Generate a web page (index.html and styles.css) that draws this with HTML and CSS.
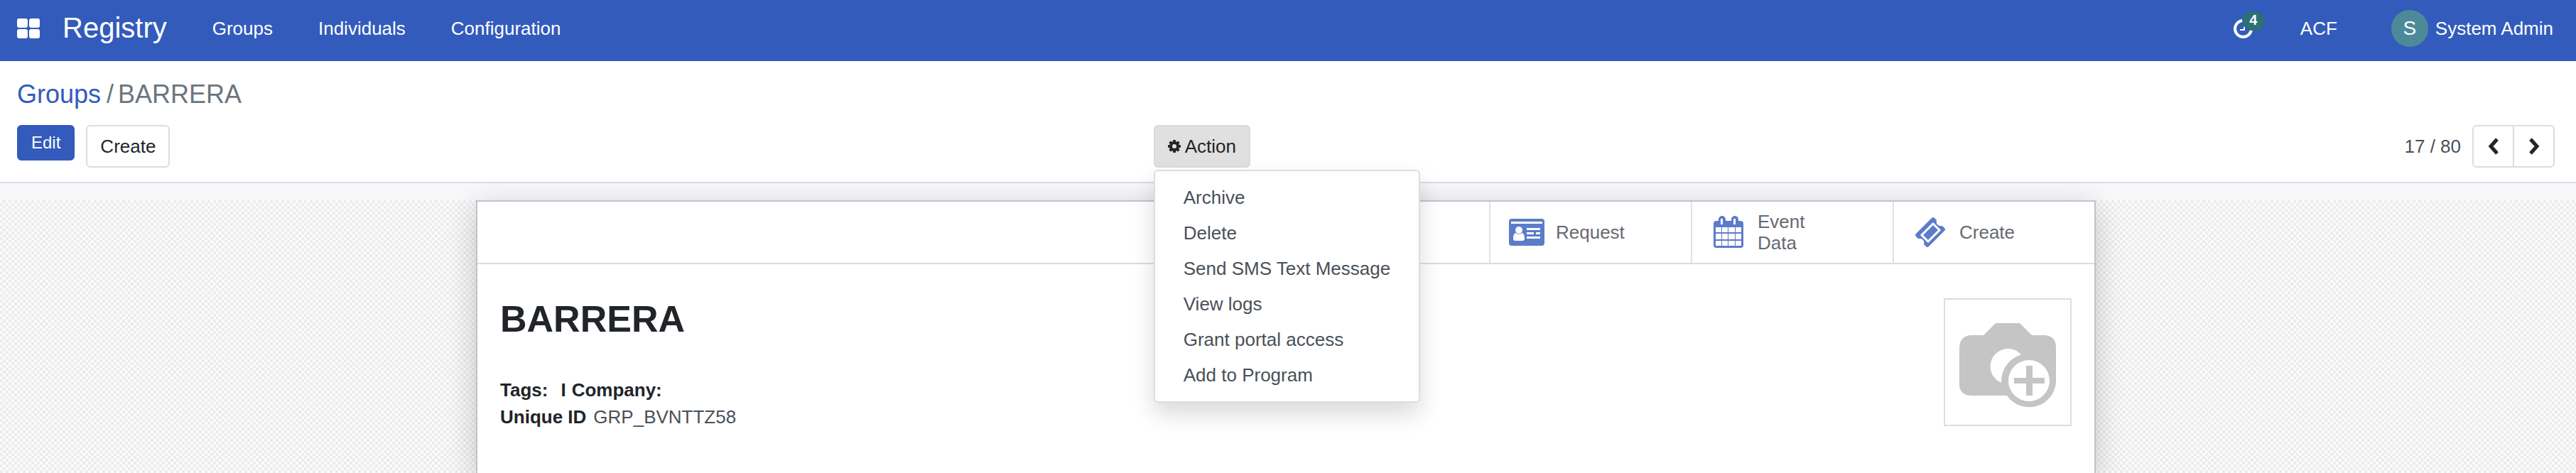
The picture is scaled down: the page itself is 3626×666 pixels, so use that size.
FILE: index.html
```html
<!DOCTYPE html>
<html lang="en">
<head>
<meta charset="utf-8">
<title>Registry - BARRERA</title>
<link rel="stylesheet" href="styles.css">
</head>
<body>
<header class="navbar">
  <button class="apps" aria-label="Apps">
    <svg width="32" height="28" viewBox="0 0 32 28" fill="currentColor"><rect width="15" height="13" rx="3"/><rect x="17" width="15" height="13" rx="3"/><rect y="15" width="15" height="13" rx="3"/><rect x="17" y="15" width="15" height="13" rx="3"/></svg>
  </button>
  <a class="brand" href="#">Registry</a>
  <nav class="menu">
    <a href="#">Groups</a>
    <a href="#">Individuals</a>
    <a href="#">Configuration</a>
  </nav>
  <div class="systray">
    <button class="activities" aria-label="Activities">
      <svg width="27" height="27" viewBox="0 0 27 27" fill="none" stroke="currentColor"><circle cx="13.500" cy="13.500" r="11.500" stroke-width="4"/><path d="M15 7v8H9" stroke-width="2"/></svg>
      <span class="badge">4</span>
    </button>
    <button class="company">ACF</button>
    <button class="user"><span class="initial">S</span>System Admin</button>
  </div>
</header>

<section class="control-panel">
  <ol class="breadcrumb">
    <li><a href="#">Groups</a></li>
    <li class="current">BARRERA</li>
  </ol>
  <div class="toolbar">
    <div class="toolbar-left">
      <div class="buttons">
        <button class="btn btn-primary">Edit</button>
        <button class="btn">Create</button>
      </div>
      <div class="dropdown">
        <button class="btn btn-action" aria-expanded="true">
          <svg width="18" height="18" viewBox="0 0 18 18"><g fill="currentColor"><circle cx="9" cy="9" r="7"/><rect x="7" y="0" width="4" height="18" rx="1"/><rect x="0" y="7" width="18" height="4" rx="1"/><g transform="rotate(45 9 9)"><rect x="7" y="0" width="4" height="18" rx="1"/><rect x="0" y="7" width="18" height="4" rx="1"/></g></g><circle cx="9" cy="9" r="3" fill="#e0e0e0"/></svg>
          Action
        </button>
        <div class="dropdown-menu">
          <button>Archive</button>
          <button>Delete</button>
          <button>Send SMS Text Message</button>
          <button>View logs</button>
          <button>Grant portal access</button>
          <button>Add to Program</button>
        </div>
      </div>
    </div>
    <div class="pager">
      <span>17 / 80</span>
      <div class="pager-buttons">
        <button aria-label="Previous"><svg width="16" height="24" viewBox="0 0 16 24"><path d="M13 2 4 12l9 10" fill="none" stroke="currentColor" stroke-width="5"/></svg></button>
        <button aria-label="Next"><svg width="16" height="24" viewBox="0 0 16 24"><path d="M3 2l9 10-9 10" fill="none" stroke="currentColor" stroke-width="5"/></svg></button>
      </div>
    </div>
  </div>
</section>

<main class="content">
  <div class="backdrop">
    <article class="sheet">
      <div class="stats">
        <button class="stat">
          <span class="stat-icon"><svg width="50" height="38" viewBox="0 0 50 38"><rect width="50" height="38" rx="4" fill="#5c7cc9"/><g fill="#fff"><path d="M3 4h44v3H3z"/><circle cx="14" cy="16" r="5"/><path d="M6 28c0-6 2-8 4-8 2 2 6 2 8 0 2 0 4 2 4 8q0 3-3 3H9q-3 0-3-3zM25 13h19v3H25zM25 19h10v3H25zM38 19h6v3h-6zM25 25h19v3H25z"/></g></svg></span>
          <span class="stat-label">Request</span>
        </button>
        <button class="stat">
          <span class="stat-icon"><svg width="42" height="46" viewBox="0 0 42 46"><rect y="7" width="42" height="38" rx="4" fill="#5c7cc9"/><rect x="7" y="0" width="10" height="15" rx="5" fill="#5c7cc9"/><rect x="25" y="0" width="10" height="15" rx="5" fill="#5c7cc9"/><g fill="#fff"><rect x="10" y="4" width="3" height="8"/><rect x="28" y="4" width="3" height="8"/><path d="M3 16h8v7H3zM12 16h8v7h-8zM21 16h9v7h-9zM31 16h8v7h-8zM3 25h8v8H3zM12 25h8v8h-8zM21 25h9v8h-9zM31 25h8v8h-8zM3 35h8v7H3zM12 35h8v7h-8zM21 35h9v7h-9zM31 35h8v7h-8z"/></g></svg></span>
          <span class="stat-label">Event Data</span>
        </button>
        <button class="stat">
          <span class="stat-icon"><svg width="42" height="42" viewBox="0 0 42 42"><path d="M23 1q2-2 4 0l3 3q-1 4 1 6 3 3 7 2l3 3q2 2 0 4L19 41q-2 2-4 0l-3-3q1-4-1-6-3-3-7-2l-3-3q-2-2 0-4z" fill="#5c7cc9"/><path d="M25 9 34 18 18 34 9 25z" fill="none" stroke="#fff" stroke-width="3"/></svg></span>
          <span class="stat-label">Create</span>
        </button>
      </div>
      <div class="record">
        <div class="details">
          <h1>BARRERA</h1>
          <p class="tags"><b>Tags:</b><b class="separator">I</b><b>Company:</b></p>
          <p class="uid"><b>Unique ID</b><span>GRP_BVNTTZ58</span></p>
        </div>
        <button class="photo" aria-label="Add photo">
          <svg viewBox="0 0 176 176"><path d="M36 50H54L71 33h34l17 17h18q16 1 16 17v50a38 38 0 0 1-69 18H36q-16-1-16-16V67q1-16 16-17z" fill="#c5c5c5"/><path d="M107 77A25 25 0 1 0 79 117q0-29 28-40z" fill="#fff"/><circle cx="118" cy="114" r="29" fill="#fff"/><path d="M114 93h9v17h17v8h-17v17h-9v-17H97v-8h17z" fill="#c5c5c5"/></svg>
        </button>
      </div>
    </article>
  </div>
</main>
</body>
</html>
```
FILE: styles.css
```css
* {
  box-sizing: border-box;
}

body {
  margin: 0;
  min-height: 100vh;
  display: flex;
  flex-direction: column;
  overflow-x: hidden;
  background: #fff;
  color: #495057;
  font-family: "Liberation Sans", Arial, sans-serif;
  font-size: 26px;
  line-height: 38px;
}

button {
  margin: 0;
  padding: 0;
  border: 0;
  background: none;
  color: inherit;
  font: inherit;
  cursor: pointer;
}

svg {
  display: block;
  flex: none;
}

a {
  color: inherit;
  text-decoration: none;
}

/* Navigation bar */
.navbar {
  display: flex;
  align-items: center;
  height: 86px;
  padding: 0 32px 6px 24px;
  background: #335bbb;
  color: #fff;
}

.brand {
  margin: 0 64px 0 32px;
  padding-bottom: 2px;
  font-size: 40px;
}

.menu {
  display: flex;
  gap: 64px;
}

.systray {
  display: flex;
  align-items: center;
  margin-left: auto;
}

.activities {
  position: relative;
  margin-right: 67px;
}

.badge {
  position: absolute;
  left: 12px;
  top: -11px;
  width: 32px;
  height: 27px;
  border-radius: 14px;
  background: #2c7075;
  font-size: 20px;
  font-weight: bold;
  line-height: 24px;
  text-align: center;
}

.company {
  margin-right: 76px;
}

.user {
  display: flex;
  align-items: center;
  gap: 10px;
}

.initial {
  width: 52px;
  height: 52px;
  border-radius: 50%;
  background: #4c8a9a;
  font-size: 28px;
  line-height: 52px;
}

/* Control panel */
.control-panel {
  padding: 16px 30px 20px 24px;
  border-bottom: 2px solid #dadce4;
}

.breadcrumb {
  display: flex;
  margin: 0 0 12px;
  padding: 0;
  list-style: none;
  font-size: 36px;
  line-height: 62px;
}

.breadcrumb a {
  color: #335bbb;
}

.current {
  color: #6c757d;
}

.current::before {
  content: "/";
  padding: 0 6px 0 8px;
}

.toolbar {
  display: flex;
  justify-content: space-between;
}

.toolbar-left {
  display: flex;
  justify-content: space-between;
  width: 50%;
  padding-right: 50px;
}

.buttons {
  display: flex;
  align-items: flex-start;
  gap: 16px;
}

.btn {
  height: 60px;
  padding: 0 18px;
  border: 2px solid #dadde2;
  border-radius: 6px;
  background: #fff;
  color: #212529;
}

.btn-primary {
  height: 50px;
  border-color: #335bbb;
  background: #335bbb;
  color: #fff;
  font-size: 24px;
}

.dropdown {
  position: relative;
}

.btn-action {
  display: flex;
  align-items: center;
  gap: 6px;
  border-color: #d9dadb;
  background: #e0e0e0;
}

.dropdown-menu {
  position: absolute;
  z-index: 2;
  top: 63px;
  left: 0;
  padding: 12px 0;
  border: 2px solid #dadde2;
  border-radius: 6px;
  background: #fff;
  box-shadow: 0 16px 32px rgba(0, 0, 0, 0.15);
}

.dropdown-menu button {
  display: block;
  width: 100%;
  height: 50px;
  padding: 0 40px;
  text-align: left;
  white-space: nowrap;
}

.pager {
  display: flex;
  align-items: center;
  gap: 16px;
}

.pager-buttons {
  display: flex;
  border: 2px solid #dadde2;
  border-radius: 6px;
  color: #212529;
}

.pager-buttons button {
  display: grid;
  place-items: center;
  width: 55px;
  height: 56px;
}

.pager-buttons button + button {
  width: 57px;
  border-left: 2px solid #dadde2;
}

/* Form view */
.content {
  flex: 1;
  display: flex;
  padding-top: 24px;
  background: #f6f8fa;
}

.backdrop {
  flex: 1;
  display: flex;
  justify-content: center;
  padding-right: 6px;
  background: repeating-conic-gradient(#ececec 0 25%, #fbfbfb 0 50%) 0 0 / 8px 8px;
}

.sheet {
  width: 2280px;
  max-width: 100%;
  border: 2px solid #c2c1cc;
  border-bottom: 0;
  background: #fff;
  box-shadow: 0 10px 40px rgba(0, 0, 0, 0.2);
}

.stats {
  display: flex;
  justify-content: flex-end;
  border-bottom: 2px solid #dadde2;
}

.stat {
  display: flex;
  align-items: center;
  gap: 14px;
  width: 284px;
  height: 86px;
  padding: 0 24px;
  border-left: 2px solid #e0e2e6;
  color: #666a70;
  line-height: 30px;
  text-align: left;
}

.stat-icon {
  display: flex;
  justify-content: center;
  flex: none;
  width: 54px;
}

.stat-label {
  max-width: 110px;
}

.record {
  display: flex;
  justify-content: space-between;
  padding: 48px 32px;
}

.details b,
.details h1 {
  color: #212529;
}

.details h1 {
  margin: 0 0 52px;
  font-size: 52px;
  line-height: 58px;
}

.details p {
  display: flex;
  margin: 0;
}

.tags {
  gap: 8px;
}

.separator {
  margin-left: 10px;
}

.uid {
  gap: 10px;
}

.photo {
  width: 180px;
  height: 180px;
  border: 2px solid #dadde2;
}
```
